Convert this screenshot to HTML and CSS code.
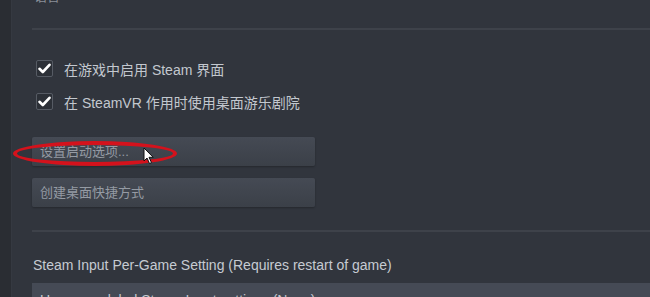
FILE: index.html
```html
<!DOCTYPE html>
<html lang="zh-CN">
<head>
    <meta charset="UTF-8">
    <title>属性 - 通用</title>
    <link rel="stylesheet" href="styles.css">
</head>
<body>
    <div class="page">
        <div class="rail"></div>
        <div class="content">
            <div class="cut-text">语言</div>
            <div class="divider"></div>

            <div class="check-row first">
                <span class="checkbox">
                    <svg width="13" height="11" viewBox="0 0 13 11"><path d="M1.5 5.8 L4.8 9 L11.5 1.8" fill="none" stroke="#fff" stroke-width="2.6" stroke-linecap="round" stroke-linejoin="round"/></svg>
                </span>
                <span class="check-label">在游戏中启用 Steam 界面</span>
            </div>
            <div class="check-row">
                <span class="checkbox">
                    <svg width="13" height="11" viewBox="0 0 13 11"><path d="M1.5 5.8 L4.8 9 L11.5 1.8" fill="none" stroke="#fff" stroke-width="2.6" stroke-linecap="round" stroke-linejoin="round"/></svg>
                </span>
                <span class="check-label">在 SteamVR 作用时使用桌面游乐剧院</span>
            </div>

            <div class="btn first-btn">设置启动选项...</div>
            <div class="btn">创建桌面快捷方式</div>

            <div class="divider second"></div>

            <div class="input-label">Steam Input Per-Game Setting (Requires restart of game)</div>
            <div class="select">Use your global Steam Input settings (None)</div>
        </div>

        <div class="highlight"></div>
        <svg class="cursor" width="12" height="18" viewBox="0 0 12 18"><path d="M1 1 L1 14 L4 11 L6.5 16.5 L8.5 15.6 L6 10.3 L10.2 10.3 Z" fill="#fff" stroke="#111" stroke-width="1"/></svg>
    </div>
</body>
</html>
```

FILE: styles.css
```css
body {
    margin: 0;
    background-color: #31353d;
    font-family: "Liberation Sans", Arial, "Noto Sans CJK SC", sans-serif;
    overflow: hidden;
}
.page {
    position: relative;
    display: flex;
    width: 650px;
    height: 297px;
    overflow: hidden;
}
.rail {
    width: 11px;
    flex-shrink: 0;
    background-color: #2a2d33;
    border-right: 1px solid #353941;
}
.content {
    flex: 1;
    margin-left: 20px;
}
.cut-text {
    height: 14px;
    margin-top: -10px;
    padding-left: 2px;
    font-size: 13px;
    line-height: 14px;
    color: #8a9099;
}
.divider {
    height: 2px;
    margin-top: 24px;
    background-color: #3e424a;
}
.divider.second {
    margin-top: 23px;
}
.check-row {
    display: flex;
    align-items: center;
    height: 17px;
    margin-top: 16px;
    padding-left: 4px;
}
.check-row.first {
    margin-top: 30px;
}
.checkbox {
    display: flex;
    align-items: center;
    justify-content: center;
    width: 15px;
    height: 15px;
    border: 1px solid #565b64;
    border-radius: 2px;
    background-color: #2c3037;
}
.check-label {
    margin-left: 11px;
    font-size: 14px;
    color: #c3c8cf;
}
.btn {
    width: 275px;
    height: 29px;
    margin-top: 12px;
    padding-left: 8px;
    font-size: 13px;
    line-height: 29px;
    color: #959ba4;
    background: linear-gradient(#454a54, #3b4048);
    border-radius: 2px;
    box-shadow: 0 1px 2px rgba(0,0,0,0.25);
}
.btn.first-btn {
    margin-top: 27px;
}
.input-label {
    margin-top: 24px;
    padding-left: 1px;
    font-size: 14px;
    line-height: 18px;
    color: #c6cbd2;
}
.select {
    height: 30px;
    margin-top: 9px;
    padding: 9px 0 0 8px;
    font-size: 14px;
    color: #c3c8cf;
    background-color: #454a55;
}
.highlight {
    position: absolute;
    left: 13px;
    top: 141px;
    width: 156px;
    height: 17px;
    border: 4px solid #d4121c;
    border-radius: 50%;
}
.cursor {
    position: absolute;
    left: 143px;
    top: 147px;
}
```
